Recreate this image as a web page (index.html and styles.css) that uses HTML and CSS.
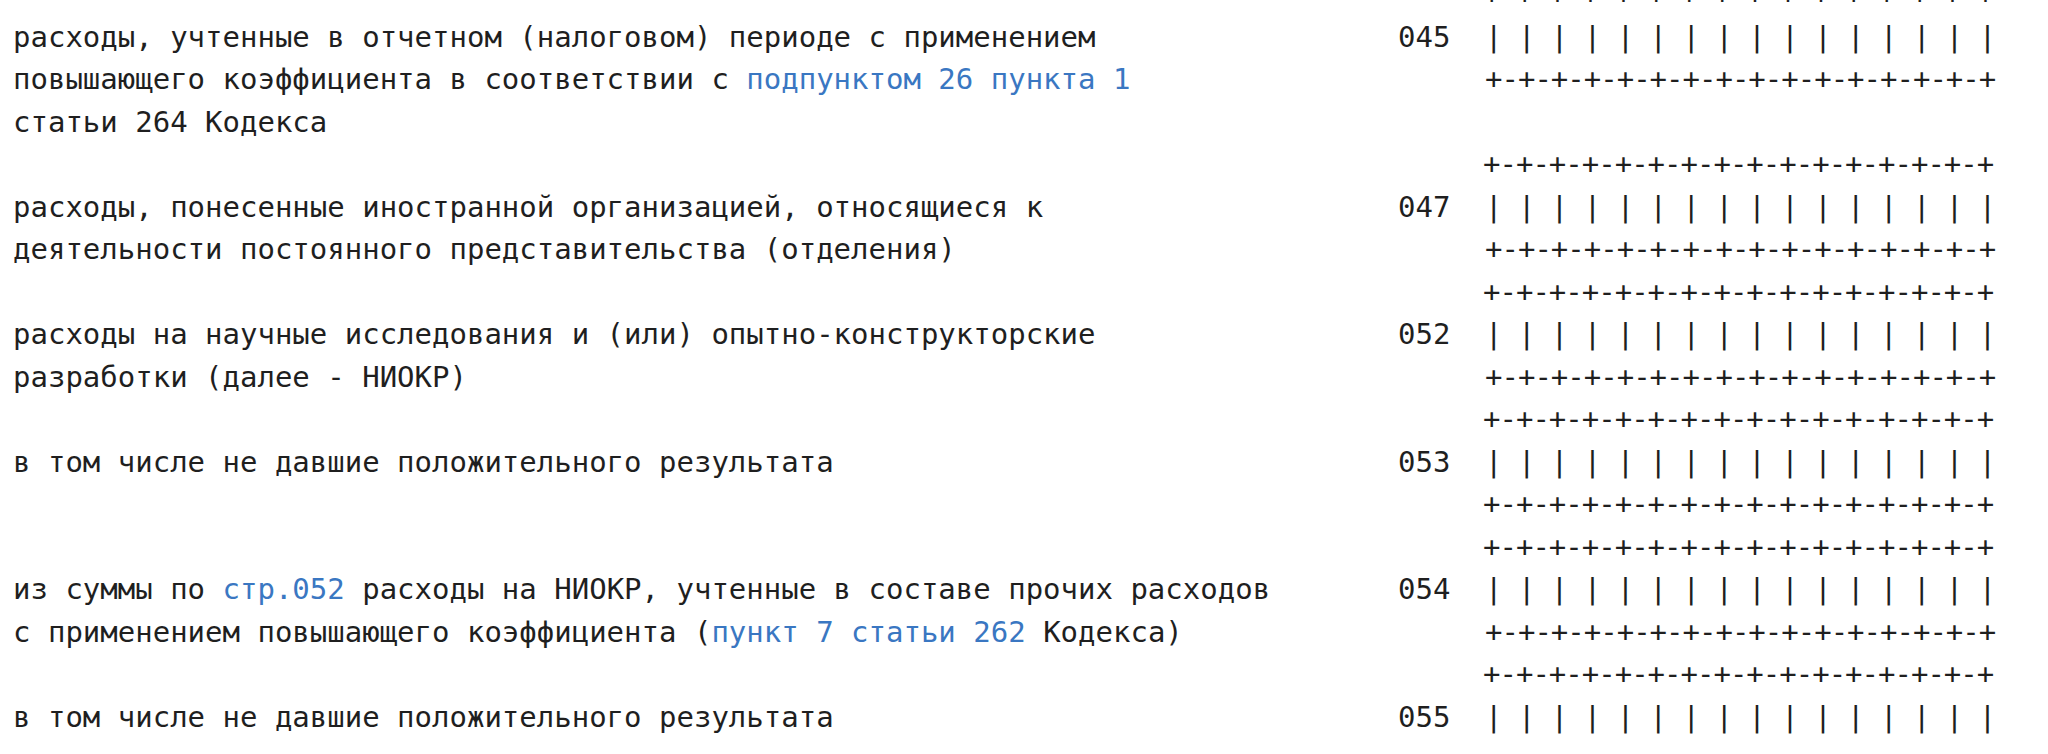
FILE: index.html
```html
<!DOCTYPE html>
<html lang="ru">
<head>
<meta charset="utf-8">
<title>Форма</title>
<link rel="stylesheet" href="styles.css">
</head>
<body>
<div class="page">
  <div class="item">
    <div class="desc">расходы, учтенные в отчетном (налоговом) периоде с применением<br>повышающего коэффициента в соответствии с <a class="ref" href="#">подпунктом 26 пункта 1</a><br>статьи 264 Кодекса</div>
    <div class="code">045</div>
    <div class="cells">
      <div class="line line--top">+-+-+-+-+-+-+-+-+-+-+-+-+-+-+-+</div>
      <div class="line">| | | | | | | | | | | | | | | |</div>
      <div class="line">+-+-+-+-+-+-+-+-+-+-+-+-+-+-+-+</div>
    </div>
  </div>
  <div class="item">
    <div class="desc">расходы, понесенные иностранной организацией, относящиеся к<br>деятельности постоянного представительства (отделения)</div>
    <div class="code">047</div>
    <div class="cells">
      <div class="line line--top">+-+-+-+-+-+-+-+-+-+-+-+-+-+-+-+</div>
      <div class="line">| | | | | | | | | | | | | | | |</div>
      <div class="line">+-+-+-+-+-+-+-+-+-+-+-+-+-+-+-+</div>
    </div>
  </div>
  <div class="item">
    <div class="desc">расходы на научные исследования и (или) опытно-конструкторские<br>разработки (далее - НИОКР)</div>
    <div class="code">052</div>
    <div class="cells">
      <div class="line line--top">+-+-+-+-+-+-+-+-+-+-+-+-+-+-+-+</div>
      <div class="line">| | | | | | | | | | | | | | | |</div>
      <div class="line">+-+-+-+-+-+-+-+-+-+-+-+-+-+-+-+</div>
    </div>
  </div>
  <div class="item">
    <div class="desc">в том числе не давшие положительного результата</div>
    <div class="code">053</div>
    <div class="cells">
      <div class="line line--top">+-+-+-+-+-+-+-+-+-+-+-+-+-+-+-+</div>
      <div class="line">| | | | | | | | | | | | | | | |</div>
      <div class="line line--top">+-+-+-+-+-+-+-+-+-+-+-+-+-+-+-+</div>
    </div>
  </div>
  <div class="item">
    <div class="desc">из суммы по <a class="ref" href="#">стр.052</a> расходы на НИОКР, учтенные в составе прочих расходов<br>с применением повышающего коэффициента (<a class="ref" href="#">пункт 7 статьи 262</a> Кодекса)</div>
    <div class="code">054</div>
    <div class="cells">
      <div class="line line--top">+-+-+-+-+-+-+-+-+-+-+-+-+-+-+-+</div>
      <div class="line">| | | | | | | | | | | | | | | |</div>
      <div class="line">+-+-+-+-+-+-+-+-+-+-+-+-+-+-+-+</div>
    </div>
  </div>
  <div class="item">
    <div class="desc">в том числе не давшие положительного результата</div>
    <div class="code">055</div>
    <div class="cells">
      <div class="line line--top">+-+-+-+-+-+-+-+-+-+-+-+-+-+-+-+</div>
      <div class="line">| | | | | | | | | | | | | | | |</div>
    </div>
  </div>
</div>
</body>
</html>
```

FILE: styles.css
```css
html, body {
  margin: 0;
  padding: 0;
  background: #ffffff;
}

body {
  overflow: hidden;
  color: #1f1f1f;
  font-family: "DejaVu Sans Mono", "Liberation Mono", monospace;
  font-size: 29px;
  line-height: 42.5px;
}

.page {
  margin-top: -27px;
  padding-left: 13px;
}

.item {
  display: grid;
  grid-template-columns: 1385px 87px max-content;
}

.desc,
.code {
  padding-top: 42.5px;
  white-space: nowrap;
}

.cells {
  display: flex;
  flex-direction: column;
}

.line {
  height: 42.5px;
  white-space: pre;
  letter-spacing: -1px;
}

.line--top {
  margin-left: -2px;
}

.ref {
  color: #3a77c2;
  text-decoration: none;
}
```
